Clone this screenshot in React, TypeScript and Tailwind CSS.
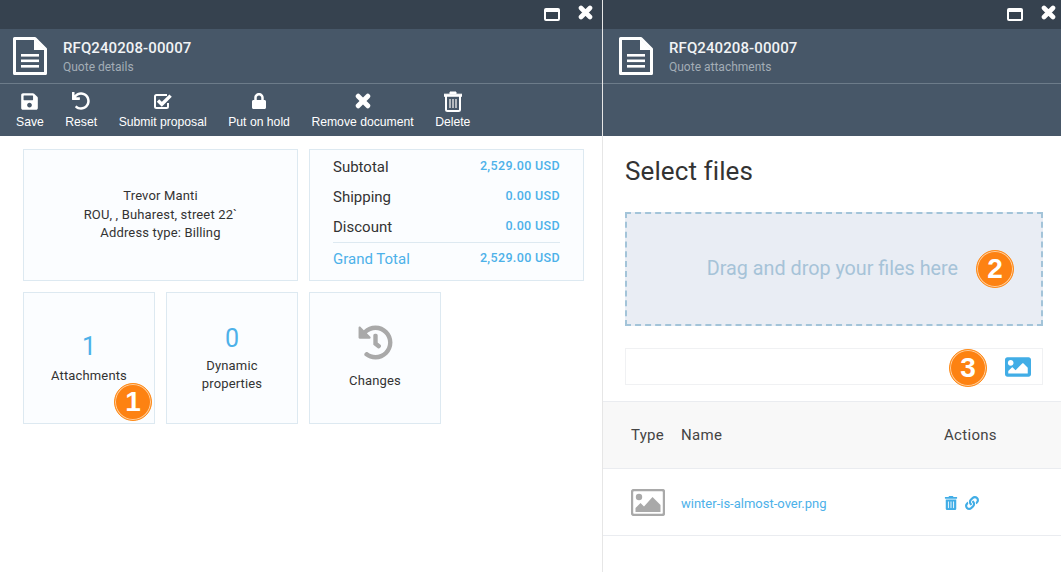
import { FaSave, FaLock, FaTrashAlt, FaLink, FaHistory, FaImage, FaUndo } from 'react-icons/fa';
import type { ReactNode } from 'react';

function DocIcon() {
  return (
    <svg width="34" height="38" viewBox="0 0 34 38" className="shrink-0">
      <path d="M1.5 1.5H22L32.5 12V36.5H1.5Z" fill="none" stroke="#fff" strokeWidth="3" strokeLinejoin="round" />
      <path d="M21 2V13H32Z" fill="#fff" />
      <rect x="8" y="17" width="18" height="2.6" fill="#fff" />
      <rect x="8" y="22.5" width="18" height="2.6" fill="#fff" />
      <rect x="8" y="28" width="18" height="2.6" fill="#fff" />
    </svg>
  );
}

function CloseIcon({ size }: { size: number }) {
  return (
    <svg width={size} height={size} viewBox="0 0 15 15">
      <path d="M3 3L12 12M12 3L3 12" stroke="#fff" strokeWidth="4.6" strokeLinecap="round" fill="none" />
    </svg>
  );
}

function CheckIcon() {
  return (
    <svg width="20" height="17" viewBox="0 0 20 17">
      <path d="M14 2H3.5A1.5 1.5 0 0 0 2 3.5v10A1.5 1.5 0 0 0 3.5 15h10a1.5 1.5 0 0 0 1.5-1.5V10" fill="none" stroke="#fff" strokeWidth="2" />
      <path d="M5 7.5L8.8 11.3L17.6 2.6" fill="none" stroke="#fff" strokeWidth="3.4" />
    </svg>
  );
}

function TrashIcon() {
  return (
    <svg width="18" height="21" viewBox="0 0 18 21">
      <path d="M0 3.2H18V5.2H0ZM6 3V1H12V3" fill="#fff" stroke="#fff" strokeWidth="1" />
      <path d="M2 5V18.5A1.5 1.5 0 0 0 3.5 20H14.5A1.5 1.5 0 0 0 16 18.5V5" fill="none" stroke="#fff" strokeWidth="2" />
      <path d="M6 8V17M9 8V17M12 8V17" stroke="#e3e3e3" strokeWidth="1.4" />
    </svg>
  );
}

function WindowControls({ padRight }: { padRight: string }) {
  return (
    <div className={`flex h-[29px] items-center justify-end bg-[#36424f] text-white ${padRight}`}>
      <svg width="16" height="13" viewBox="0 0 16 13" className="mr-[18px] mt-[-1px]">
        <rect x="1" y="1" width="14" height="11" rx="1" fill="none" stroke="#fff" strokeWidth="2" />
        <rect x="1" y="1" width="14" height="3" fill="#fff" />
      </svg>
      <div className="mb-[5px]"><CloseIcon size={15} /></div>
    </div>
  );
}

function PanelHeader({ subtitle, padLeft }: { subtitle: string; padLeft: string }) {
  return (
    <div className={`flex h-[55px] items-center border-b border-[#6d7c8a] ${padLeft}`}>
      <DocIcon />
      <div className="ml-[16px] mt-[2px]">
        <div className="text-[15px] leading-[18px] font-medium tracking-[0.1px] text-[#f1f3f5]">RFQ240208-00007</div>
        <div className="mt-[2px] text-[12px] leading-[17px] text-[#a3adb6]">{subtitle}</div>
      </div>
    </div>
  );
}

function ToolButton({ icon, label }: { icon: ReactNode; label: string }) {
  return (
    <div className="flex flex-col items-center text-white">
      <div className="flex h-[22px] items-center text-[19px]">{icon}</div>
      <span className="mt-[3px] font-['Liberation_Sans',sans-serif] text-[12.2px] leading-[14px] whitespace-nowrap">{label}</span>
    </div>
  );
}

function Badge({ n, className }: { n: number; className: string }) {
  return (
    <div className={`absolute flex h-[38px] w-[38px] items-center justify-center rounded-full border border-[#ff8c1a] bg-[#fd8212] font-['Liberation_Sans',sans-serif] text-[28px] font-bold text-white shadow-[inset_0_0_0_1px_#ffd0a0] ${className}`}>
      {n}
    </div>
  );
}

function TotalRow({ label, value, accent }: { label: string; value: string; accent?: boolean }) {
  return (
    <div className="flex h-[30px] items-center justify-between">
      <span className={`text-[15px] ${accent ? 'text-[#4db1e9]' : 'text-[#333]'}`}>{label}</span>
      <span className="mb-[2px] text-[12.5px] font-medium tracking-[0.35px] text-[#4db1e9]">{value}</span>
    </div>
  );
}

function Tile({ children }: { children: ReactNode }) {
  return (
    <div className="relative flex h-[132px] w-[132px] flex-col items-center justify-center border border-[#dde9f1] bg-[#fbfdff] text-center text-[13px] leading-[18px] tracking-[0.15px] text-[#333]">
      {children}
    </div>
  );
}

export default function App() {
  return (
    <div className="flex h-[572px] w-[1061px] overflow-hidden bg-white font-['Roboto',sans-serif]">
      <div className="w-[603px] shrink-0 border-r border-[#e6e6e6]">
        <div className="bg-[#475768]">
          <WindowControls padRight="pr-[9px]" />
          <PanelHeader subtitle="Quote details" padLeft="pl-[13px]" />
          <div className="flex h-[52px] items-start gap-[21.5px] pl-[16px] pt-[6px]">
            <ToolButton icon={<FaSave />} label="Save" />
            <ToolButton icon={<FaUndo className="text-[18px]" />} label="Reset" />
            <ToolButton icon={<CheckIcon />} label="Submit proposal" />
            <ToolButton icon={<FaLock className="text-[16px]" />} label="Put on hold" />
            <ToolButton icon={<CloseIcon size={16} />} label="Remove document" />
            <ToolButton icon={<TrashIcon />} label="Delete" />
          </div>
        </div>
        <div className="flex flex-col gap-[11px] pl-[23px] pt-[13px]">
          <div className="flex gap-[11px]">
            <div className="flex h-[132px] w-[275px] flex-col items-center justify-center border border-[#dde9f1] bg-[#fbfdff] text-[13px] leading-[18.5px] tracking-[0.15px] text-[#333]">
              <div>Trevor Manti</div>
              <div>ROU, , Buharest, street 22`</div>
              <div>Address type: Billing</div>
            </div>
            <div className="h-[132px] w-[275px] border border-[#dde9f1] bg-[#fbfdff] px-[23px] pt-[2px]">
              <TotalRow label="Subtotal" value="2,529.00 USD" />
              <TotalRow label="Shipping" value="0.00 USD" />
              <TotalRow label="Discount" value="0.00 USD" />
              <div className="border-t border-[#dde9f1] pt-[1px]">
                <TotalRow label="Grand Total" value="2,529.00 USD" accent />
              </div>
            </div>
          </div>
          <div className="flex gap-[11px]">
            <Tile>
              <div className="text-[25px] leading-[28px] text-[#4db1e9]">1</div>
              <div className="mt-[5px] translate-y-[0.5px]">Attachments</div>
              <Badge n={1} className="right-[2px] bottom-[2px]" />
            </Tile>
            <Tile>
              <div className="mt-[1px] text-[25px] leading-[28px] text-[#4db1e9]">0</div>
              <div className="mt-[4px]">Dynamic<br />properties</div>
            </Tile>
            <Tile>
              <FaHistory className="text-[35px] text-[#a9a9a9]" />
              <div className="mb-[2px] mt-[12px]">Changes</div>
            </Tile>
          </div>
        </div>
      </div>
      <div className="min-w-0 flex-1">
        <div className="bg-[#475768]">
          <WindowControls padRight="pr-[5px]" />
          <PanelHeader subtitle="Quote attachments" padLeft="pl-[16px]" />
          <div className="h-[52px]" />
        </div>
        <div className="pl-[22px] pr-[18px] pt-[19px]">
          <h1 className="text-[26px] leading-[32px] tracking-[0.1px] text-[#333]">Select files</h1>
          <div className="relative mt-[25px] flex h-[114px] items-center justify-end border-2 border-dashed border-[#a3c4d9] bg-[#e9edf4] pr-[83px] text-[19.75px] text-[#a6c3d8]">
            Drag and drop your files here
            <Badge n={2} className="right-[27px] top-[36px]" />
          </div>
          <div className="relative mt-[22px] flex h-[37px] items-center justify-end border border-[#f0f1f3] pr-[11px]">
            <FaImage className="text-[26px] text-[#41ade6]" />
            <Badge n={3} className="right-[55px] top-[0px]" />
          </div>
        </div>
        <div className="mt-[16px] flex h-[68px] items-center border-y border-[#eaecf0] bg-[#f8f8f8] pl-[28px] text-[15px] tracking-[0.3px] text-[#444]">
          <div className="w-[50px]">Type</div>
          <div className="w-[263px]">Name</div>
          <div>Actions</div>
        </div>
        <div className="flex h-[67px] items-center border-b border-[#eaecf0] pl-[28px]">
          <div className="w-[50px]"><PictureIcon /></div>
          <div className="w-[263px] pt-[3px] text-[13px] text-[#4db1e9]">winter-is-almost-over.png</div>
          <div className="flex items-center gap-[7px] pt-[1px] text-[14px] text-[#41ade6]">
            <FaTrashAlt />
            <FaLink />
          </div>
        </div>
      </div>
    </div>
  );
}

function PictureIcon() {
  return (
    <svg width="34" height="27" viewBox="0 0 34 27">
      <rect x="1" y="1" width="32" height="25" rx="2" fill="none" stroke="#a9a9a9" strokeWidth="2.4" />
      <circle cx="8" cy="8" r="3.2" fill="#a9a9a9" />
      <path d="M4.5 23v-4l5-5 3.5 3.5L21.5 8 29.5 16v7Z" fill="#a9a9a9" />
    </svg>
  );
}
